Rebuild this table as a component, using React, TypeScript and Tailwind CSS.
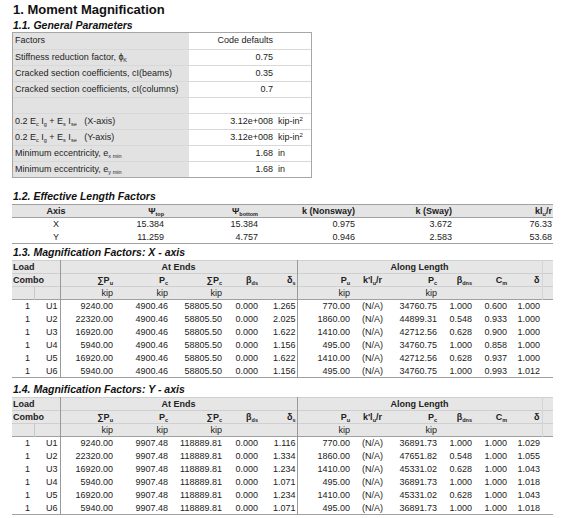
import React from "react";

const font = { fontFamily: '"Liberation Sans", Arial, sans-serif' };

function Sub({ children }: { children: React.ReactNode }) {
  return <span className="relative top-[2px] text-[5.5px] leading-none">{children}</span>;
}

function Heading({ children }: { children: React.ReactNode }) {
  return <div className="text-[10.5px] leading-[12px] font-bold italic text-[#111]">{children}</div>;
}

const sup = <span className="relative top-[-3px] text-[6px] leading-none">2</span>;

const params: { label: React.ReactNode; value: string; unit?: React.ReactNode }[] = [
  { label: "Factors", value: "Code defaults" },
  { label: <>Stiffness reduction factor, ɸ<Sub>K</Sub></>, value: "0.75" },
  { label: "Cracked section coefficients, cI(beams)", value: "0.35" },
  { label: "Cracked section coefficients, cI(columns)", value: "0.7" },
  { label: "", value: "" },
  {
    label: <>0.2 E<Sub>c</Sub> I<Sub>g</Sub> + E<Sub>s</Sub> I<Sub>se</Sub>&nbsp;&nbsp; (X-axis)</>,
    value: "3.12e+008",
    unit: <>kip-in{sup}</>,
  },
  {
    label: <>0.2 E<Sub>c</Sub> I<Sub>g</Sub> + E<Sub>s</Sub> I<Sub>se</Sub>&nbsp;&nbsp; (Y-axis)</>,
    value: "3.12e+008",
    unit: <>kip-in{sup}</>,
  },
  { label: <>Minimum eccentricity, e<Sub>x min</Sub></>, value: "1.68", unit: "in" },
  { label: <>Minimum eccentricity, e<Sub>y min</Sub></>, value: "1.68", unit: "in" },
];

function GeneralParams() {
  return (
    <div className="w-[300px] border border-[#a6a6a6]">
      {params.map((p, i) => (
        <div key={i} className={`flex h-[16px] text-[9px] leading-[15px] ${i > 0 ? "border-t border-[#d8d8d8]" : ""}`}>
          <div className="w-[176px] bg-[#e2e2e2] pl-[2px] text-[#222] whitespace-nowrap">{p.label}</div>
          <div className="w-[84px] text-right text-[#222]">{p.value}</div>
          <div className="flex-1 pl-[5px] text-[#222] whitespace-nowrap">{p.unit}</div>
        </div>
      ))}
    </div>
  );
}

function EffectiveLength() {
  const rows = [
    ["X", "15.384", "15.384", "0.975", "3.672", "76.33"],
    ["Y", "11.259", "4.757", "0.946", "2.583", "53.68"],
  ];
  const widths = [88, 66, 94, 97, 97, 99];
  return (
    <table className="w-[541px] table-fixed border-collapse text-[9px] text-[#222]">
      <colgroup>
        {widths.map((w, i) => (
          <col key={i} style={{ width: w }} />
        ))}
      </colgroup>
      <thead>
        <tr className="h-[13px] bg-[#e4e4e4] border-t border-b border-[#a0a0a0] font-bold leading-[12px]">
          <th className="p-0 text-center font-bold">Axis</th>
          <th className="p-0 text-right pr-[2px] font-bold">Ψ<Sub>top</Sub></th>
          <th className="p-0 text-right pr-[2px] font-bold">Ψ<Sub>bottom</Sub></th>
          <th className="p-0 text-right pr-[2px] font-bold">k (Nonsway)</th>
          <th className="p-0 text-right pr-[2px] font-bold">k (Sway)</th>
          <th className="p-0 text-right pr-[1px] font-bold">kl<Sub>u</Sub>/r</th>
        </tr>
      </thead>
      <tbody className="border-b border-[#a0a0a0]">
        {rows.map((r) => (
          <tr key={r[0]} className="h-[13px] leading-[12px]">
            <td className="text-center">{r[0]}</td>
            {r.slice(1).map((c, j) => (
              <td key={j} className={`text-right ${j === 4 ? "pr-[1px]" : "pr-[2px]"}`}>{c}</td>
            ))}
          </tr>
        ))}
      </tbody>
    </table>
  );
}

type MagRow = string[];

function MagTable({ rows }: { rows: MagRow[] }) {
  const widths = [22, 26, 55, 55, 54, 36, 37, 55, 31, 56, 35, 35, 33, 11];
  const hb = "border-b border-[#cfcfcf]";
  const vr = "border-r border-[#9a9a9a]";
  return (
    <table className="w-[541px] table-fixed border-collapse text-[9px] text-[#222]">
      <colgroup>
        {widths.map((w, i) => (
          <col key={i} style={{ width: w }} />
        ))}
      </colgroup>
      <thead className="bg-[#e6e6e6] leading-[12px]">
        <tr className={`h-[13px] border-t border-[#a0a0a0] ${hb}`}>
          <th colSpan={2} className={`text-left pl-[1px] font-bold ${vr}`}>Load</th>
          <th colSpan={5} className={`text-center font-bold ${vr}`}>At Ends</th>
          <th colSpan={6} className="text-center font-bold border-r border-[#d4d4d4]">Along Length</th>
          <th></th>
        </tr>
        <tr className={`h-[13px] ${hb}`}>
          <th colSpan={2} className={`text-left pl-[1px] font-bold ${vr}`}>Combo</th>
          <th className="text-right pr-[2px] font-bold">∑P<Sub>u</Sub></th>
          <th className="text-right pr-[2px] font-bold">P<Sub>c</Sub></th>
          <th className="text-right pr-[2px] font-bold">∑P<Sub>c</Sub></th>
          <th className="text-right pr-[2px] font-bold">β<Sub>ds</Sub></th>
          <th className={`text-right pr-[1px] font-bold ${vr}`}>δ<Sub>s</Sub></th>
          <th className="text-right pr-[2px] font-bold">P<Sub>u</Sub></th>
          <th className="text-right pr-[1px] font-bold">k'l<Sub>u</Sub>/r</th>
          <th className="text-right pr-[2px] font-bold">P<Sub>c</Sub></th>
          <th className="text-right pr-[2px] font-bold">β<Sub>dns</Sub></th>
          <th className="text-right pr-[2px] font-bold">C<Sub>m</Sub></th>
          <th className="text-right pr-[2px] font-bold border-r border-[#d4d4d4]">δ</th>
          <th></th>
        </tr>
        <tr className="h-[13px] border-b border-[#a0a0a0]">
          <th className="border-r border-[#c8c8c8]"></th>
          <th className={vr}></th>
          <th className="text-right pr-[2px] font-normal">kip</th>
          <th className="text-right pr-[2px] font-normal">kip</th>
          <th className="text-right pr-[2px] font-normal">kip</th>
          <th></th>
          <th className={vr}></th>
          <th className="text-right pr-[2px] font-normal">kip</th>
          <th></th>
          <th className="text-right pr-[2px] font-normal">kip</th>
          <th></th>
          <th></th>
          <th className="border-r border-[#d4d4d4]"></th>
          <th></th>
        </tr>
      </thead>
      <tbody className="border-b border-[#a0a0a0] leading-[12px]">
        {rows.map((r, i) => (
          <tr key={i} className="h-[13px]">
            <td className="text-right pr-[4px]">1</td>
            <td className={`text-right pr-[2px] ${vr}`}>{r[0]}</td>
            {r.slice(1, 6).map((c, j) => (
              <td key={j} className={`text-right ${j === 4 ? `pr-[1px] ${vr}` : "pr-[2px]"}`}>{c}</td>
            ))}
            <td className="text-right pr-[2px]">{r[6]}</td>
            <td className="text-left pl-[10px]">(N/A)</td>
            {r.slice(7).map((c, j) => (
              <td key={j} className="text-right pr-[2px]">{c}</td>
            ))}
            <td></td>
          </tr>
        ))}
      </tbody>
    </table>
  );
}

const xRows: MagRow[] = [
  ["U1", "9240.00", "4900.46", "58805.50", "0.000", "1.265", "770.00", "34760.75", "1.000", "0.600", "1.000"],
  ["U2", "22320.00", "4900.46", "58805.50", "0.000", "2.025", "1860.00", "44899.31", "0.548", "0.933", "1.000"],
  ["U3", "16920.00", "4900.46", "58805.50", "0.000", "1.622", "1410.00", "42712.56", "0.628", "0.900", "1.000"],
  ["U4", "5940.00", "4900.46", "58805.50", "0.000", "1.156", "495.00", "34760.75", "1.000", "0.858", "1.000"],
  ["U5", "16920.00", "4900.46", "58805.50", "0.000", "1.622", "1410.00", "42712.56", "0.628", "0.937", "1.000"],
  ["U6", "5940.00", "4900.46", "58805.50", "0.000", "1.156", "495.00", "34760.75", "1.000", "0.993", "1.012"],
];

const yRows: MagRow[] = [
  ["U1", "9240.00", "9907.48", "118889.81", "0.000", "1.116", "770.00", "36891.73", "1.000", "1.000", "1.029"],
  ["U2", "22320.00", "9907.48", "118889.81", "0.000", "1.334", "1860.00", "47651.82", "0.548", "1.000", "1.055"],
  ["U3", "16920.00", "9907.48", "118889.81", "0.000", "1.234", "1410.00", "45331.02", "0.628", "1.000", "1.043"],
  ["U4", "5940.00", "9907.48", "118889.81", "0.000", "1.071", "495.00", "36891.73", "1.000", "1.000", "1.018"],
  ["U5", "16920.00", "9907.48", "118889.81", "0.000", "1.234", "1410.00", "45331.02", "0.628", "1.000", "1.043"],
  ["U6", "5940.00", "9907.48", "118889.81", "0.000", "1.071", "495.00", "36891.73", "1.000", "1.000", "1.018"],
];

export default function App() {
  return (
    <div className="w-[564px] h-[518px] overflow-hidden bg-white pl-[12px] text-[#111]" style={font}>
      <div className="pl-[1px] text-[13px] leading-[18px] font-bold pt-[1px]">1. Moment Magnification</div>
      <div className="pl-[1px]">
        <Heading>1.1. General Parameters</Heading>
      </div>
      <div className="mt-[1px]">
        <GeneralParams />
      </div>
      <div className="pl-[1px] mt-[12px]">
        <Heading>1.2. Effective Length Factors</Heading>
      </div>
      <div className="mt-[2px]">
        <EffectiveLength />
      </div>
      <div className="pl-[1px] mt-[2px]">
        <Heading>1.3. Magnification Factors: X - axis</Heading>
      </div>
      <div className="mt-[2px]">
        <MagTable rows={xRows} />
      </div>
      <div className="pl-[1px] mt-[5px]">
        <Heading>1.4. Magnification Factors: Y - axis</Heading>
      </div>
      <div className="mt-[2px]">
        <MagTable rows={yRows} />
      </div>
    </div>
  );
}
